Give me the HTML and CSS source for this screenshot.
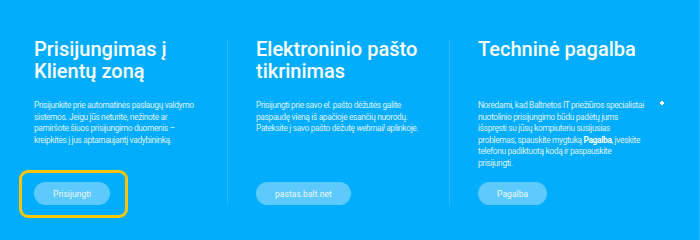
FILE: index.html
```html
<!DOCTYPE html>
<html lang="lt">
<head>
<meta charset="utf-8">
<title>Prisijungimas</title>
<link rel="stylesheet" href="styles.css">
</head>
<body>
<main class="page">
  <section class="col">
    <h2 class="title">Prisijungimas į Klientų zoną</h2>
    <p class="text">Prisijunkite prie automatinės paslaugų valdymo<br>sistemos. Jeigu jūs neturite, nežinote ar<br>pamiršote šiuos prisijungimo duomenis –<br>kreipkitės į jus aptarnaujantį vadybininką.</p>
    <div class="action">
      <a class="btn btn-focus" href="#">Prisijungti</a>
    </div>
  </section>
  <section class="col">
    <h2 class="title">Elektroninio pašto tikrinimas</h2>
    <p class="text">Prisijungti prie savo el. pašto dėžutės galite<br>paspaudę vieną iš apačioje esančių nuorodų.<br>Pateksite į savo pašto dėžutę <em>webmail</em> aplinkoje.</p>
    <div class="action">
      <a class="btn" href="#">pastas.balt.net</a>
    </div>
  </section>
  <section class="col col-last">
    <h2 class="title">Techninė pagalba</h2>
    <p class="text">Norėdami, kad Baltnetos IT priežiūros specialistai<br>nuotolinio prisijungimo būdu padėtų jums<br>išspręsti su jūsų kompiuteriu susijusias<br>problemas, spauskite mygtuką <strong>Pagalba</strong>, įveskite<br>telefonu padiktuotą kodą ir paspauskite<br>prisijungti.</p>
    <div class="action">
      <a class="btn" href="#">Pagalba</a>
    </div>
    <span class="sparkle"></span>
  </section>
</main>
</body>
</html>
```

FILE: styles.css
```css
* { box-sizing: border-box; }
html, body { margin: 0; padding: 0; }
body {
  background: #02adfd;
  font-family: "Roboto", "Liberation Sans", sans-serif;
  color: #fff;
  width: 700px;
  height: 240px;
  overflow: hidden;
}
.page {
  display: grid;
  grid-template-columns: 222px 222px 222px;
  padding: 40px 0 0 6px;
  height: 240px;
  border-right: 1px solid rgba(255,255,255,0.18);
}
.col {
  position: relative;
  display: flex;
  flex-direction: column;
  height: 165px;
  padding: 0 12px 0 28px;
  border-right: 1px solid rgba(255,255,255,0.16);
}
.col-last { border-right: none; }
.title {
  margin: -2px 0 0;
  font-size: 20px;
  line-height: 22px;
  font-weight: 500;
  min-height: 44px;
}
.text {
  margin: 18px 0 0;
  font-size: 8.4px;
  line-height: 11.6px;
  letter-spacing: -0.35px;
  font-weight: 400;
  color: rgba(255,255,255,0.88);
}
.text strong { font-weight: 700; color: #fff; }
.text em { font-style: italic; }
.action {
  margin-top: auto;
  display: flex;
}
.btn {
  position: relative;
  display: inline-flex;
  align-items: center;
  height: 23px;
  padding: 0 19px;
  border-radius: 12px;
  background: rgba(255,255,255,0.36);
  color: rgba(255,255,255,0.92);
  font-size: 8.6px;
  text-decoration: none;
}
.btn-focus::after {
  content: "";
  position: absolute;
  left: -15px;
  right: -18px;
  top: -12px;
  bottom: -13px;
  border: 3px solid #fec600;
  border-radius: 9px;
}
.sparkle {
  position: absolute;
  left: 210px;
  top: 61px;
  width: 4px;
  height: 4px;
}
.sparkle::before, .sparkle::after {
  content: "";
  position: absolute;
  background: #fff;
}
.sparkle::before { left: 1px; top: 0; width: 2px; height: 4px; }
.sparkle::after { left: 0; top: 1px; width: 4px; height: 2px; }
```
